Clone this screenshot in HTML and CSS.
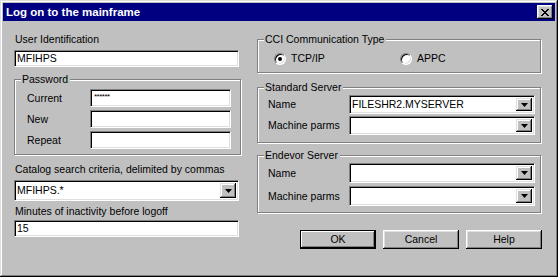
FILE: index.html
```html
<!DOCTYPE html>
<html lang="en">
<head>
    <meta charset="UTF-8">
    <title>Log on to the mainframe</title>
    <link rel="stylesheet" href="styles.css">
</head>
<body>
    <div class="window">
        <div class="titlebar">
            <span class="title">Log on to the mainframe</span>
            <span class="close">
                <svg width="8" height="7" viewBox="0 0 8 7" shape-rendering="crispEdges">
                    <path d="M0 0h2v1h1v1h2v-1h1v-1h2v1h-1v1h-1v1h-1v1h1v1h1v1h1v1h-2v-1h-1v-1h-2v1h-1v1h-2v-1h1v-1h1v-1h1v-1h-1v-1h-1v-1h-1z" fill="#000"/>
                </svg>
            </span>
        </div>

        <div class="content">
            <div class="col-left">
                <div class="lbl first">User Identification</div>
                <div class="field edit"><span class="val">MFIHPS</span></div>

                <div class="group pw">
                    <span class="group-title">Password</span>
                    <div class="row">
                        <span class="row-label">Current</span>
                        <div class="field pwfield"><span class="stars">******</span></div>
                    </div>
                    <div class="row">
                        <span class="row-label">New</span>
                        <div class="field pwfield"></div>
                    </div>
                    <div class="row">
                        <span class="row-label">Repeat</span>
                        <div class="field pwfield"></div>
                    </div>
                </div>

                <div class="lbl catalog">Catalog search criteria, delimited by commas</div>
                <div class="field combo big">
                    <span class="val">MFIHPS.*</span>
                    <span class="drop"><svg width="7" height="4" viewBox="0 0 7 4"><path d="M0 0h7L3.5 4z" fill="#000"/></svg></span>
                </div>

                <div class="lbl minutes">Minutes of inactivity before logoff</div>
                <div class="field edit last"><span class="val">15</span></div>
            </div>

            <div class="col-right">
                <div class="group cci">
                    <span class="group-title">CCI Communication Type</span>
                    <div class="radios">
                        <span class="radio checked"></span><span class="radio-text tcp">TCP/IP</span>
                        <span class="radio"></span><span class="radio-text">APPC</span>
                    </div>
                </div>

                <div class="group server std">
                    <span class="group-title">Standard Server</span>
                    <div class="row">
                        <span class="row-label">Name</span>
                        <div class="field combo">
                            <span class="val">FILESHR2.MYSERVER</span>
                            <span class="drop"><svg width="7" height="4" viewBox="0 0 7 4"><path d="M0 0h7L3.5 4z" fill="#000"/></svg></span>
                        </div>
                    </div>
                    <div class="row">
                        <span class="row-label">Machine parms</span>
                        <div class="field combo">
                            <span class="val"></span>
                            <span class="drop"><svg width="7" height="4" viewBox="0 0 7 4"><path d="M0 0h7L3.5 4z" fill="#000"/></svg></span>
                        </div>
                    </div>
                </div>

                <div class="group server endevor">
                    <span class="group-title">Endevor Server</span>
                    <div class="row">
                        <span class="row-label">Name</span>
                        <div class="field combo">
                            <span class="val"></span>
                            <span class="drop"><svg width="7" height="4" viewBox="0 0 7 4"><path d="M0 0h7L3.5 4z" fill="#000"/></svg></span>
                        </div>
                    </div>
                    <div class="row">
                        <span class="row-label">Machine parms</span>
                        <div class="field combo">
                            <span class="val"></span>
                            <span class="drop"><svg width="7" height="4" viewBox="0 0 7 4"><path d="M0 0h7L3.5 4z" fill="#000"/></svg></span>
                        </div>
                    </div>
                </div>

                <div class="buttons">
                    <span class="btn default">OK</span>
                    <span class="btn">Cancel</span>
                    <span class="btn">Help</span>
                </div>
            </div>
        </div>
    </div>
</body>
</html>
```

FILE: styles.css
```css
html, body {
    margin: 0;
    padding: 0;
}
body {
    font-family: "Liberation Sans", Arial, sans-serif;
    font-size: 10.5px;
    line-height: 13px;
    color: #000;
    background: #c0c0c0;
}
.window {
    box-sizing: border-box;
    width: 558px;
    height: 277px;
    padding: 3px;
    background: #c0c0c0;
    box-shadow: inset -1px -1px #000, inset 1px 1px #dfdfdf, inset -2px -2px #808080, inset 2px 2px #fff;
}
.titlebar {
    height: 18px;
    background: #000080;
    display: flex;
    align-items: center;
    justify-content: space-between;
    padding-left: 3px;
}
.title {
    color: #fff;
    font-weight: bold;
    font-size: 11.5px;
}
.close {
    width: 16px;
    height: 14px;
    margin-right: 2px;
    box-sizing: border-box;
    background: #c0c0c0;
    display: flex;
    align-items: center;
    justify-content: center;
    box-shadow: inset -1px -1px #000, inset 1px 1px #fff, inset -2px -2px #808080, inset 2px 2px #dfdfdf;
}
.close svg {
    display: block;
    margin-left: -1px;
}
.content {
    display: flex;
    justify-content: space-between;
    padding: 12px 13px 0 11px;
}
.col-left {
    width: 228px;
}
.col-right {
    width: 285px;
}

/* sunken white fields */
.field {
    box-sizing: border-box;
    background: #fff;
    border: 1px solid;
    border-color: #808080 #fff #fff #808080;
    box-shadow: inset 1px 1px #000, inset -1px -1px #dfdfdf;
    display: flex;
    align-items: center;
}
.val {
    padding-left: 2px;
    flex: 1;
    white-space: nowrap;
}
.edit {
    width: 225px;
    height: 17px;
    margin-top: 4px;
}
.edit.last {
    margin-top: 2px;
}
.lbl {
    height: 13px;
    padding-left: 1px;
}
.lbl.first {
    padding-top: 1px;
    margin-top: -1px;
}
.lbl.catalog {
    margin-top: 8px;
}
.lbl.minutes {
    margin-top: 4px;
}

/* group boxes */
.group {
    position: relative;
    box-sizing: border-box;
    border: 1px solid #808080;
    box-shadow: inset 1px 1px #fff, 1px 1px #fff;
}
.group-title {
    position: absolute;
    top: -7px;
    left: 6px;
    padding: 0 2px 0 1px;
    background: #c0c0c0;
}
.pw {
    margin-top: 12px;
    height: 76px;
    width: 227px;
    padding: 9px 0 0 12px;
}
.row {
    display: flex;
    align-items: center;
}
.pw .row + .row {
    margin-top: 3px;
}
.pw .row-label {
    width: 63px;
}
.pwfield {
    width: 141px;
    height: 18px;
}
.stars {
    font-size: 8px;
    padding-left: 3px;
    margin-top: -4px;
    letter-spacing: -0.5px;
}

/* combo boxes */
.combo {
    padding: 2px;
}
.combo .drop {
    width: 16px;
    align-self: stretch;
    box-sizing: border-box;
    background: #c0c0c0;
    display: flex;
    align-items: center;
    justify-content: center;
    box-shadow: inset -1px -1px #000, inset 1px 1px #dfdfdf, inset -2px -2px #808080, inset 2px 2px #fff;
}
.combo .drop svg {
    display: block;
}
.combo .val {
    padding-left: 0;
}
.big {
    width: 225px;
    height: 21px;
    margin-top: 4px;
}

/* right column */
.cci {
    margin-top: 6px;
    height: 34px;
    width: 284px;
}
.radios {
    display: flex;
    align-items: center;
    padding: 12px 0 0 16px;
}
.radio {
    box-sizing: border-box;
    width: 12px;
    height: 12px;
    border-radius: 50%;
    background: #fff;
    border: 1px solid;
    border-color: #808080 #fff #fff #808080;
    box-shadow: inset 1px 1px #000, inset -1px -1px #dfdfdf;
    display: flex;
    align-items: center;
    justify-content: center;
}
.radio.checked::after {
    content: "";
    width: 4px;
    height: 4px;
    border-radius: 50%;
    background: #000;
}
.radio-text {
    margin-left: 5px;
}
.radio-text.tcp {
    width: 109px;
}
.server {
    width: 284px;
    padding: 7px 5px 0 10px;
}
.std {
    margin-top: 14px;
    height: 56px;
}
.endevor {
    margin-top: 12px;
    height: 58px;
}
.server .row + .row {
    margin-top: 2px;
}
.endevor .row + .row {
    margin-top: 3px;
}
.server .row-label {
    width: 81px;
}
.server .combo {
    width: 186px;
    height: 19px;
}
.endevor .combo {
    height: 20px;
}

/* push buttons */
.buttons {
    display: flex;
    justify-content: flex-end;
    gap: 7px;
    margin-top: 17px;
}
.btn {
    box-sizing: border-box;
    width: 76px;
    height: 19px;
    display: flex;
    align-items: center;
    justify-content: center;
    background: #c0c0c0;
    box-shadow: inset -1px -1px #000, inset 1px 1px #fff, inset -2px -2px #808080, inset 2px 2px #dfdfdf;
}
.btn.default {
    border: 1px solid #000;
    box-shadow: inset -1px -1px #000, inset 1px 1px #fff, inset -2px -2px #808080;
}
```
